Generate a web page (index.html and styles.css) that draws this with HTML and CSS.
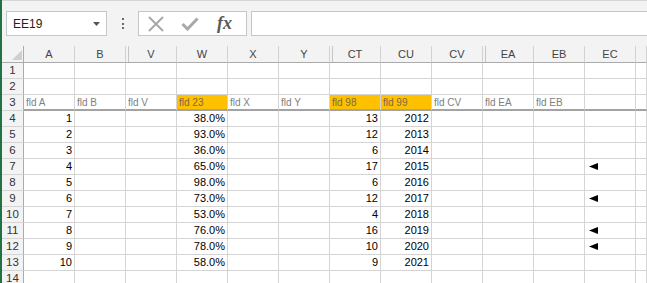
FILE: index.html
```html
<!DOCTYPE html>
<html lang="en">
<head>
    <meta charset="UTF-8">
    <title>Sheet</title>
    <link rel="stylesheet" href="styles.css">
</head>
<body>
    <div class="app">
        <div class="toolbar">
            <div class="name-box">
                <span class="name-text">EE19</span>
                <svg class="name-arrow" width="7" height="4" viewBox="0 0 7 4"><polygon points="0,0 7,0 3.5,4" fill="#555"/></svg>
            </div>
            <div class="grip">
                <span></span><span></span><span></span>
            </div>
            <div class="fx-buttons">
                <svg class="btn-icon" width="18" height="16" viewBox="0 0 18 16">
                    <path d="M2 1 L16 15 M16 1 L2 15" stroke="#a8a8a8" stroke-width="2" fill="none"/>
                </svg>
                <svg class="btn-icon" width="18" height="14" viewBox="0 0 18 14">
                    <path d="M1.5 7 L6.5 12 L16.5 1.5" stroke="#a8a8a8" stroke-width="3" fill="none"/>
                </svg>
                <span class="fx">fx</span>
            </div>
            <div class="formula-input"></div>
        </div>
        <div class="sheet" id="sheet"></div>
    </div>

    <script>
        const cols = ['A', 'B', 'V', 'W', 'X', 'Y', 'CT', 'CU', 'CV', 'EA', 'EB', 'EC'];
        const hiddenBefore = ['V', 'CT', 'EA'];
        const labels = {
            A: 'fld A', B: 'fld B', V: 'fld V', W: 'fld 23', X: 'fld X', Y: 'fld Y',
            CT: 'fld 98', CU: 'fld 99', CV: 'fld CV', EA: 'fld EA', EB: 'fld EB', EC: ''
        };
        const accent = ['W', 'CT', 'CU'];
        const pct = [38, 93, 36, 65, 98, 73, 53, 76, 78, 58];
        const counts = [13, 12, 6, 17, 6, 12, 4, 16, 10, 9];
        const flagged = [7, 9, 11, 12];

        const sheet = document.getElementById('sheet');

        function cell(cls, text) {
            const el = document.createElement('div');
            el.className = cls;
            if (text !== undefined) el.textContent = text;
            sheet.appendChild(el);
            return el;
        }

        // column headers
        const corner = cell('ch corner');
        corner.innerHTML = '<svg width="10" height="10" viewBox="0 0 10 10"><polygon points="10,0 10,10 0,10" fill="#cfcfcf"/></svg>';
        cols.forEach(c => cell(hiddenBefore.includes(c) ? 'ch hid' : 'ch', c));
        cell('ch');

        // rows
        for (let r = 1; r <= 14; r++) {
            cell('rh', r);
            cols.forEach(c => {
                let cls = 'c';
                let text = '';
                if (r === 3) {
                    cls += ' label';
                    if (accent.includes(c)) cls += ' accent';
                    text = labels[c];
                } else if (r >= 4 && r <= 13) {
                    const i = r - 4;
                    if (c === 'A') text = i + 1;
                    if (c === 'W') text = pct[i].toFixed(1) + '%';
                    if (c === 'CT') text = counts[i];
                    if (c === 'CU') text = 2012 + i;
                    if (text !== '') cls += ' num';
                }
                const el = cell(cls, text);
                if (c === 'EC' && flagged.includes(r)) {
                    el.innerHTML = '<svg class="mark" width="9" height="7" viewBox="0 0 9 7"><polygon points="0,3.5 9,0 9,7" fill="#000"/></svg>';
                }
            });
            cell(r === 3 ? 'c label' : 'c');
        }
    </script>
</body>
</html>
```

FILE: styles.css
```css
* {
    margin: 0;
    padding: 0;
    box-sizing: border-box;
}
body {
    font-family: 'Liberation Sans', Arial, sans-serif;
    background: #fff;
    overflow: hidden;
}
.app {
    height: 283px;
    border-left: 2px solid #217346;
    overflow: hidden;
}
.toolbar {
    height: 46px;
    background: #f3f3f3;
    border-top: 1px solid #d6d6d6;
    padding-top: 10px;
    display: flex;
    align-items: flex-start;
}
.name-box {
    width: 101px;
    height: 25px;
    margin-left: 4px;
    background: #fff;
    border: 1px solid #c6c6c6;
    display: flex;
    align-items: center;
    padding-left: 6px;
}
.name-text {
    font-size: 12px;
    color: #222;
}
.name-arrow {
    margin-left: auto;
    margin-right: 6px;
}
.grip {
    width: 31px;
    height: 25px;
    display: flex;
    flex-direction: column;
    align-items: center;
    justify-content: center;
    gap: 2.5px;
}
.grip span {
    width: 2px;
    height: 2px;
    background: #6a6a6a;
}
.fx-buttons {
    width: 109px;
    height: 25px;
    background: #fff;
    border: 1px solid #c6c6c6;
    display: flex;
    align-items: center;
    padding-left: 8px;
    gap: 16px;
}
.fx {
    font-family: 'Liberation Serif', 'Times New Roman', serif;
    font-style: italic;
    font-weight: bold;
    font-size: 18px;
    color: #595959;
    margin-left: 2px;
}
.formula-input {
    flex: 1;
    height: 25px;
    margin-left: 4px;
    background: #fff;
    border: 1px solid #c6c6c6;
    border-right: none;
}
.sheet {
    display: grid;
    grid-template-columns: 22px repeat(12, 51px) 1fr;
    grid-template-rows: 17px;
    grid-auto-rows: 16px;
}
.ch {
    background: #f3f3f3;
    color: #444;
    font-size: 11px;
    line-height: 16px;
    text-align: center;
    border-right: 1px solid #d2d2d2;
    border-bottom: 1px solid #ababab;
}
.ch.hid {
    background: linear-gradient(to right, transparent 2px, #c6c6c6 2px, #c6c6c6 3px, transparent 3px), #f3f3f3;
}
.corner {
    display: flex;
    align-items: flex-end;
    justify-content: flex-end;
    padding: 0 1px 2px 0;
    border-right-color: #ababab;
}
.rh {
    background: #f3f3f3;
    color: #333;
    font-size: 11.5px;
    line-height: 15px;
    text-align: center;
    border-right: 1px solid #ababab;
    border-bottom: 1px solid #d4d4d4;
}
.c {
    font-size: 11px;
    line-height: 15px;
    color: #000;
    padding: 0 2px;
    white-space: nowrap;
    overflow: hidden;
    border-right: 1px solid #d4d4d4;
    border-bottom: 1px solid #d4d4d4;
}
.num {
    text-align: right;
}
.label {
    font-size: 10px;
    line-height: 15px;
    color: #808080;
    border-bottom: 2px solid #a3a3a3;
}
.accent {
    background: #ffc000;
    color: #7a6a48;
}
.mark {
    display: block;
    margin: 4px 0 0 2px;
}
```
